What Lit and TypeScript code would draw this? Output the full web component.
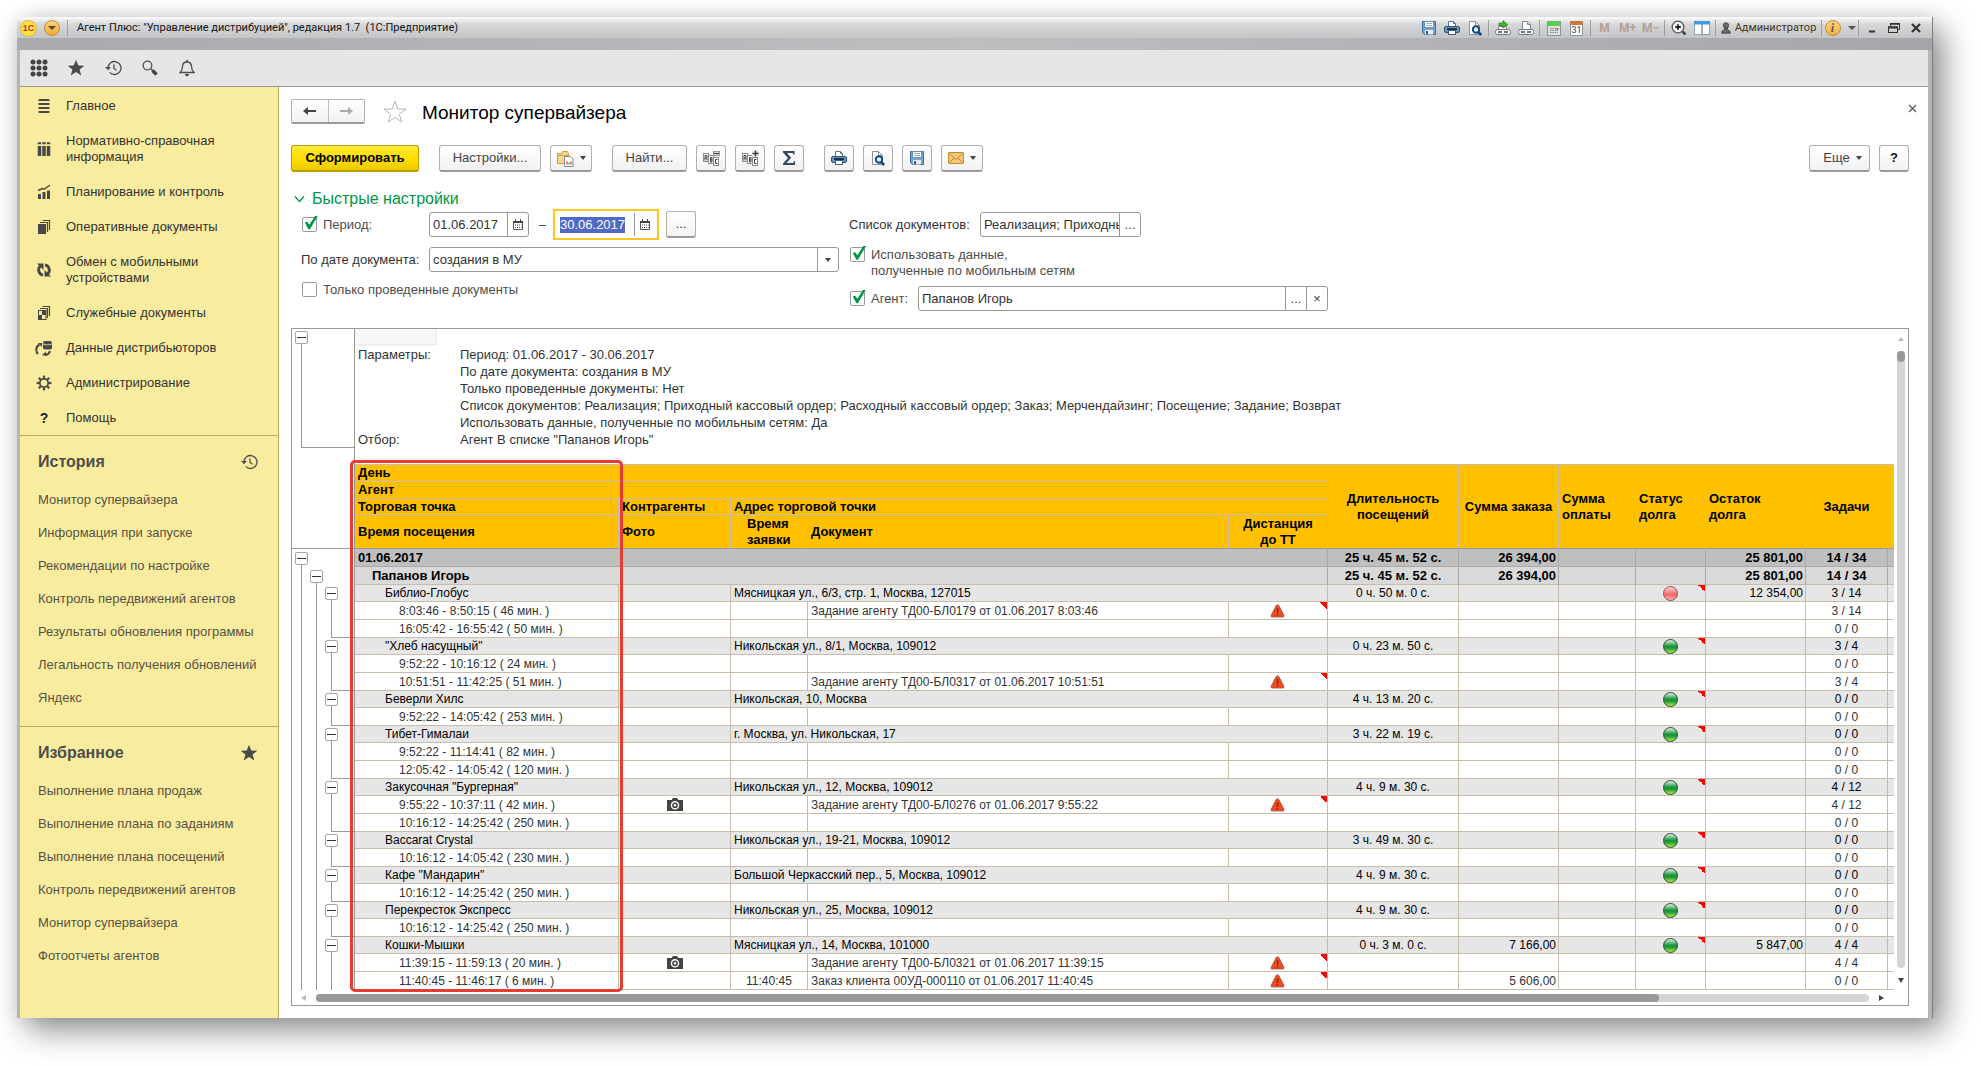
import { LitElement, html, css, svg, nothing, TemplateResult } from "lit";
import { customElement, query } from "lit/decorators.js";
import { classMap } from "lit/directives/class-map.js";

const icon = (w: number, h: number, body: TemplateResult, vb = `0 0 ${w} ${h}`) =>
  html`<svg width=${w} height=${h} viewBox=${vb} aria-hidden="true">${body}</svg>`;

const floppy = icon(16, 16, svg`
  <path d="M1.5 1.5h13v13h-11l-2-2z" fill="#7ba3cc" stroke="#3f6a97"/>
  <rect x="3.5" y="1.5" width="9" height="6" fill="#fff" stroke="#6d8fb5"/>
  <path d="M5 3.5h6M5 5.5h6" stroke="#9db3cb"/>
  <rect x="4" y="10" width="8" height="4.5" fill="#e9eef4"/><rect x="5" y="11" width="2" height="3.5" fill="#2f5f92"/>`);
const printer = icon(16, 16, svg`
  <path d="M4.5 7V1.5h5l2 2V7" fill="#fff" stroke="#5b7590"/>
  <path d="M9.5 1.5v2h2" fill="none" stroke="#5b7590"/>
  <rect x="0.5" y="6.5" width="15" height="6" rx="1.5" fill="#6d95bb" stroke="#2d5278"/>
  <rect x="3" y="8" width="10" height="2" fill="#16334f"/>
  <rect x="4.5" y="10.5" width="7" height="4" fill="#fff" stroke="#3c5f83"/>`);
const preview = icon(16, 16, svg`
  <path d="M2.5 1.5h6l4 4v9h-10z" fill="#fff" stroke="#8a9099"/>
  <path d="M8.5 1.5v4h4" fill="none" stroke="#8a9099"/>
  <circle cx="9" cy="9.5" r="3.2" fill="#e4f1fb" stroke="#0d4d80" stroke-width="2"/>
  <path d="M11.2 12l3 3" stroke="#0d4d80" stroke-width="2.5"/>`);
const sendPrint = icon(16, 16, svg`
  <path d="M3.5 9.5V6.5h8v3" fill="#fff" stroke="#7f8791"/>
  <rect x="0.5" y="9.5" width="15" height="5" rx="2" fill="#f2f3f5" stroke="#6f7782"/>
  <path d="M3 12h4M9 12h4" stroke="#6f7782" stroke-width="2"/>
  <path d="M4 3.2h4V.8l4.5 3.7L8 8V5.8H4z" fill="#35c22a" stroke="#157a12" stroke-width=".8"/>`);
const sheetPrint = icon(16, 16, svg`
  <path d="M4.5 9.5V1.5h5l3 3v5" fill="#fff" stroke="#7f8791"/><path d="M9.5 1.5v3h3" fill="none" stroke="#7f8791"/>
  <rect x="0.5" y="9.5" width="15" height="5" rx="2" fill="#f2f3f5" stroke="#6f7782"/>
  <path d="M3 12h4M9 12h4" stroke="#6f7782" stroke-width="2"/>`);
const calc = icon(14, 16, svg`
  <rect x=".5" y="1.5" width="13" height="14" fill="#dfe3e3" stroke="#8c9594"/>
  <rect x="1" y="1" width="12" height="5" fill="#55cf55"/>
  <path d="M3 8.5h8M3 10.5h8M3 12.5h8" stroke="#6f7b7a" stroke-dasharray="1.5 1"/><path d="M10.5 8v2" stroke="#e03a30" stroke-width="1.5"/>`);
const calendar31 = html`<span class="cal31"><i></i><b>31</b></span>`;
const zoomPlus = icon(16, 16, svg`
  <circle cx="7" cy="7" r="5.8" fill="#f6f6f6" stroke="#555" stroke-width="1.3"/>
  <path d="M4.2 7h5.6M7 4.2v5.6" stroke="#222" stroke-width="1.8"/><path d="M11.5 11.5l3 3" stroke="#444" stroke-width="2.5"/>`);
const panes = icon(16, 16, svg`
  <rect x=".5" y="1.5" width="15" height="13" fill="#fff" stroke="#8aa2b5"/><rect x="0" y="1" width="16" height="3.5" fill="#3d9be6"/>
  <path d="M8 4v11" stroke="#6f8494" stroke-width="1.3"/>`);
const person = icon(10, 12, svg`
  <circle cx="5" cy="3.5" r="2.7" fill="#6a6a6a" stroke="#3a3a3a" stroke-width=".8"/>
  <path d="M.8 11.2V9.5Q2.5 8 3.8 7.3V6h2.400v1.300Q7.5 8 9.2 9.5v1.7z" fill="#6a6a6a" stroke="#3a3a3a" stroke-width=".8"/>`);
const historyIcon = icon(18, 16, svg`
  <path d="M4 8a6.500 6.500 0 1 1 1.700 4.400" fill="none" stroke="#4d4d4d" stroke-width="1.300"/>
  <path d="M1 7h6l-3 3.200z" fill="#4d4d4d"/><path d="M10 4.500V8.500l2.500 1.800" fill="none" stroke="#4d4d4d" stroke-width="1.300"/>`);
const starIcon = icon(18, 18, svg`
  <path d="M9 .8l2.300 5.700 6 .2-4.700 3.800 1.700 6L9 13.100l-5.300 3.400 1.700-6L.7 6.700l6-.2z" fill="#4a4a4a"/>`);
const starOutline = icon(24, 24, svg`
  <path d="M12 1l2.700 8 8.300.1-6.700 5 2.500 8L12 17.300 5.200 22.100l2.500-8L1 9.100 9.300 9z" fill="#fff" stroke="#b4b8bc"/>`);
const gridIcon = icon(18, 18, svg`${[3, 9, 15].map((y) => [3, 9, 15].map((x) => svg`<circle cx=${x} cy=${y} r="2.500" fill="#444"/>`))}`);
const searchIcon = icon(16, 16, svg`
  <circle cx="5.500" cy="5.500" r="4.300" fill="none" stroke="#4d4d4d" stroke-width="1.300"/>
  <path d="M8.500 8.500l2.500 2.500" stroke="#4d4d4d" stroke-width="1.300"/><path d="M10.500 10.500l4 4" stroke="#444" stroke-width="3.500"/>`);
const bellIcon = icon(16, 18, svg`
  <path d="M1 13.500Q3.500 11 3.500 7.500 3.500 3 8 3t4.500 4.500Q12.500 11 15 13.500z" fill="none" stroke="#4d4d4d" stroke-width="1.300"/>
  <path d="M8 .8v2.400" stroke="#4d4d4d" stroke-width="1.500"/><path d="M6 15.500h4l-2 1.800z" fill="#4d4d4d" stroke="#4d4d4d"/>`);
const arrow = (left: boolean, c: string) => icon(13, 10, svg`
  <path d=${left ? "M13 4H5V1L0 5l5 4V6h8z" : "M0 4h8V1l5 4-5 4V6H0z"} fill=${c}/>`);
const sigma = icon(14, 16, svg`<path d="M1 1h11.500v3.500h-1.500V3H5l4.200 4.800L4.500 13h7V11.200H13V15H1v-1.500L6 8 1 2.500z" fill="#34495c"/>`);
const abc = (plus: boolean) => icon(17, 16, svg`
  <g fill="#fff" stroke="#8b8b8b"><rect x=".5" y="3.500" width="5" height="8"/><rect x="5.500" y="5.500" width="5" height="8"/><rect x="10.500" y="7.500" width="5" height="8"/></g>
  <g fill="none" stroke="#3f3f3f"><path d="M2 10.500V5.500h2v5M2 8h2"/><path d="M7.500 7.500h1.500v4.500H7.500z M7.500 9.800h1.500"/><path d="M14.500 9.500h-2v4h2"/></g>
  ${plus
    ? svg`<rect x="10" y="0" width="7" height="7" fill="#e9e9e9"/><path d="M10.500 3.500h6M13.500 .5v6" stroke="#3a3a3a" stroke-width="1.400"/>`
    : svg`<rect x="10.500" y="1.500" width="6" height="4" fill="#fff" stroke="#999"/><path d="M11 3.500h5" stroke="#3a3a3a" stroke-width="1.400"/>`}`);
const folder = icon(17, 17, svg`
  <path d="M.5 3.500V13.500h11V3.500l-1-2h-5l-1 2z" fill="#f6d88c" stroke="#cf9f45"/><path d="M1 5.500h10" stroke="#cf9f45"/>
  <path d="M7.500 6.500h6l2.500 2.500v7.500H7.500z" fill="#fff" stroke="#7d8a9a"/>
  <path d="M10 14.500v-3M14 14.500v-3" stroke="#d8433a" stroke-width="1.300"/><path d="M12 14.500v-2" stroke="#3cae4a" stroke-width="1.300"/>`);
const mail = icon(16, 12, svg`
  <rect x=".5" y=".5" width="15" height="11" rx="1" fill="#f5c878" stroke="#c4862a"/>
  <path d="M1 1l7 6.500L15 1M1 11l5-5M15 11l-5-5" fill="none" stroke="#c4862a"/>`);
const dateIcon = icon(10, 11, svg`
  <path d="M.5 2.500h9v8h-9z" fill="#fff" stroke="#555"/><path d="M0 3h10" stroke="#444" stroke-width="2"/><path d="M2.500 0v3M7.500 0v3" stroke="#444"/>
  <path d="M2 6h6.500M2 8.500h6.500" stroke="#444" stroke-dasharray="1 1"/>`);
const caret = html`<i class="caret"></i>`;
const warn = icon(15, 14, svg`
  <path d="M7.500.8Q8.500.8 9 1.800L14 11.500Q14.300 13 13 13H2Q.7 13 1 11.500L6 1.800Q6.500.8 7.500.8z" fill="#f4481e" stroke="#8d5a4c" stroke-width=".8"/>
  <path d="M7.500 4v5M7.500 10v1.600" stroke="#7a3020" stroke-width="1.500"/>`);
const camera = icon(16, 13, svg`
  <path d="M0 2h4.500L6 0h4l1.500 2H16v11H0z" fill="#444"/><circle cx="8" cy="7.300" r="3.600" fill="none" stroke="#fff" stroke-width="1.400"/><circle cx="8" cy="7.300" r="1.300" fill="#fff"/>`);

const g = "#484848";
const navIcons: Record<string, TemplateResult> = {
  main: icon(16, 16, svg`<path d="M2.500 2h11M2.500 6h11M2.500 10h11M2.500 14h11" stroke=${g} stroke-width="1.800"/>`),
  books: icon(16, 16, svg`<path d="M3.500 5v10M8 5v10M12.500 5v10" stroke=${g} stroke-width="3.500"/><path d="M1.800 2.200h3.400M6.300 2.200h3.400M10.800 2.200h3.400" stroke=${g} stroke-width="2"/>`),
  plan: icon(16, 16, svg`<path d="M3.500 10v5M8 8v7M12.500 6.500v8.500" stroke=${g} stroke-width="3"/><path d="M2 6.500l4.500-2 2 .5L14 1" fill="none" stroke=${g} stroke-width="1.400"/>`),
  docs: icon(16, 16, svg`<rect x="2" y="5" width="8" height="10" fill=${g}/><path d="M4 3.500h7.500V13M6.500 1.500h7V11" fill="none" stroke=${g} stroke-width="1.200"/>`),
  sync: icon(16, 16, svg`<path d="M7 13.200A5.400 5.400 0 0 1 4.300 4M9 2.800A5.400 5.400 0 0 1 11.700 12" fill="none" stroke=${g} stroke-width="2.800"/><path d="M1 1.500h6.500V8zM15 14.500H8.500V8z" fill=${g}/>`),
  service: icon(16, 16, svg`<rect x="2.500" y="5.500" width="7.500" height="9" fill="none" stroke=${g}/><path d="M2 10h4v5H2zM6 5.500h4V10H6z" fill=${g}/><path d="M4 3.500h7.500V13M6.500 1.500h7V11" fill="none" stroke=${g} stroke-width="1.200"/>`),
  dist: icon(18, 16, svg`<path d="M3 14A6 6 0 0 1 4.500 4.500" fill="none" stroke=${g} stroke-width="2"/><path d="M3 3h4v4z" fill=${g}/><rect x="8" y="1" width="9" height="8.500" rx="2" fill=${g}/><path d="M8 4q4.500 2 9 0" stroke="#faec9e" fill="none" stroke-width=".8"/><path d="M15 11q-1 3.500-4.500 4" stroke=${g} stroke-width="2" fill="none"/><path d="M11 11.500V16l-4-1z" fill=${g}/>`),
  gear: icon(16, 16, svg`<circle cx="8" cy="8" r="4.200" fill="none" stroke=${g} stroke-width="1.800"/>${[0, 45, 90, 135, 180, 225, 270, 315].map((a) => svg`<path d="M8 3.500V.6" stroke=${g} stroke-width="2.200" transform=${`rotate(${a} 8 8)`}/>`)}`),
  help: html`<b class="q">?</b>`,
};

const nav: [string, string][] = [
  ["main", "Главное"], ["books", "Нормативно-справочная информация"], ["plan", "Планирование и контроль"],
  ["docs", "Оперативные документы"], ["sync", "Обмен с мобильными устройствами"], ["service", "Служебные документы"],
  ["dist", "Данные дистрибьюторов"], ["gear", "Администрирование"], ["help", "Помощь"],
];
const history = ["Монитор супервайзера", "Информация при запуске", "Рекомендации по настройке", "Контроль передвижений агентов",
  "Результаты обновления программы", "Легальность получения обновлений", "Яндекс"];
const favorites = ["Выполнение плана продаж", "Выполнение плана по заданиям", "Выполнение плана посещений",
  "Контроль передвижений агентов", "Монитор супервайзера", "Фотоотчеты агентов"];

interface Visit { time: string; tasks: string; doc?: string; at?: string; photo?: boolean; warn?: boolean; sum?: string }
interface Outlet { name: string; address: string; duration: string; tasks: string; red?: boolean; sum?: string; debt?: string; visits: Visit[] }

const outlets: Outlet[] = [
  { name: "Библио-Глобус", address: "Мясницкая ул., 6/3, стр. 1, Москва, 127015", duration: "0 ч. 50 м. 0 с.", tasks: "3 / 14", red: true, debt: "12 354,00", visits: [
    { time: "8:03:46 - 8:50:15 ( 46 мин. )", doc: "Задание агенту ТД00-БЛ0179 от 01.06.2017 8:03:46", warn: true, tasks: "3 / 14" },
    { time: "16:05:42 - 16:55:42 ( 50 мин. )", tasks: "0 / 0" }] },
  { name: "\"Хлеб насущный\"", address: "Никольская ул., 8/1, Москва, 109012", duration: "0 ч. 23 м. 50 с.", tasks: "3 / 4", visits: [
    { time: "9:52:22 - 10:16:12 ( 24 мин. )", tasks: "0 / 0" },
    { time: "10:51:51 - 11:42:25 ( 51 мин. )", doc: "Задание агенту ТД00-БЛ0317 от 01.06.2017 10:51:51", warn: true, tasks: "3 / 4" }] },
  { name: "Беверли Хилс", address: "Никольская, 10, Москва", duration: "4 ч. 13 м. 20 с.", tasks: "0 / 0", visits: [
    { time: "9:52:22 - 14:05:42 ( 253 мин. )", tasks: "0 / 0" }] },
  { name: "Тибет-Гималаи", address: "г. Москва, ул. Никольская, 17", duration: "3 ч. 22 м. 19 с.", tasks: "0 / 0", visits: [
    { time: "9:52:22 - 11:14:41 ( 82 мин. )", tasks: "0 / 0" },
    { time: "12:05:42 - 14:05:42 ( 120 мин. )", tasks: "0 / 0" }] },
  { name: "Закусочная \"Бургерная\"", address: "Никольская ул., 12, Москва, 109012", duration: "4 ч. 9 м. 30 с.", tasks: "4 / 12", visits: [
    { time: "9:55:22 - 10:37:11 ( 42 мин. )", photo: true, doc: "Задание агенту ТД00-БЛ0276 от 01.06.2017 9:55:22", warn: true, tasks: "4 / 12" },
    { time: "10:16:12 - 14:25:42 ( 250 мин. )", tasks: "0 / 0" }] },
  { name: "Baccarat Crystal", address: "Никольская ул., 19-21, Москва, 109012", duration: "3 ч. 49 м. 30 с.", tasks: "0 / 0", visits: [
    { time: "10:16:12 - 14:05:42 ( 230 мин. )", tasks: "0 / 0" }] },
  { name: "Кафе \"Мандарин\"", address: "Большой Черкасский пер., 5, Москва, 109012", duration: "4 ч. 9 м. 30 с.", tasks: "0 / 0", visits: [
    { time: "10:16:12 - 14:25:42 ( 250 мин. )", tasks: "0 / 0" }] },
  { name: "Перекресток Экспресс", address: "Никольская ул., 25, Москва, 109012", duration: "4 ч. 9 м. 30 с.", tasks: "0 / 0", visits: [
    { time: "10:16:12 - 14:25:42 ( 250 мин. )", tasks: "0 / 0" }] },
  { name: "Кошки-Мышки", address: "Мясницкая ул., 14, Москва, 101000", duration: "0 ч. 3 м. 0 с.", tasks: "4 / 4", sum: "7 166,00", debt: "5 847,00", visits: [
    { time: "11:39:15 - 11:59:13 ( 20 мин. )", photo: true, doc: "Задание агенту ТД00-БЛ0321 от 01.06.2017 11:39:15", warn: true, tasks: "4 / 4" },
    { time: "11:40:45 - 11:46:17 ( 6 мин. )", at: "11:40:45", doc: "Заказ клиента 00УД-000110 от 01.06.2017 11:40:45", warn: true, sum: "5 606,00", tasks: "0 / 0" }] },
];

const base = css`
  * { box-sizing: border-box; }
  svg { display: block; flex: none; }
  button, input, select { font: inherit; color: inherit; margin: 0; }
  button { cursor: pointer; }
  i, b { font-style: normal; }
`;

@customElement("title-bar")
export class TitleBar extends LitElement {
  static styles = [base, css`
    :host { display: block; font: 11px/20px Roboto, "Liberation Sans", sans-serif; color: #151515; }
    .bar { display: flex; align-items: center; height: 21px; padding: 1px 5px 0 3px; background: linear-gradient(#fbfbfb, #d6d7d9 35%, #c3c5c7); }
    .strip { height: 12px; background: linear-gradient(90deg, #a9aaad, #bdbec0 50%, #a5a6aa); }
    .bar button { display: flex; align-items: center; justify-content: center; width: 23px; height: 20px; padding: 0; border: 0; background: none; }
    .bar .win { width: 22px; }
    .logo { width: 17px; height: 17px; border-radius: 50%; background: radial-gradient(#fff36b, #f7d51f); border: 1px solid #e0b93a; color: #d8201c; font: bold 9px/15px "Liberation Sans", sans-serif; text-align: center; }
    .bar .drop { width: 16px; height: 16px; margin: 0 5px 0 7px; border-radius: 50%; border: 1px solid #c98c28; background: linear-gradient(#fbd382, #f0a93a); color: #5b4632; }
    .caret { border: 4px solid transparent; border-top-color: currentColor; border-bottom: 0; }
    .sep { width: 1px; height: 16px; margin: 0 2px; background: #9b9da0; }
    .text { flex: 1; padding-left: 7px; white-space: pre; }
    .bar .m { color: #b3a092; font-size: 12px; font-weight: bold; }
    .bar .user { width: 101px; gap: 4px; color: #4a3510; }
    .bar .info { width: 32px; gap: 7px; color: #555; }
    .ball { width: 16px; height: 16px; border-radius: 50%; border: 1px solid #c98c28; background: linear-gradient(#fbd382, #f2b14a); font: italic bold 12px/14px "Liberation Serif", serif; color: #6b5536; }
    .cal31 { width: 13px; height: 15px; background: #fff; border: 1px solid #8b97a5; border-top: 0; display: block; }
    .cal31 i { display: block; height: 4px; background: #c9773f; margin: 0 -1px; }
    .cal31 b { display: block; font: 9px/10px Roboto, sans-serif; color: #345; }
  `];
  render() {
    const sep = html`<span class="sep"></span>`;
    const b = (label: string, body: unknown, cls = "") => html`<button class=${cls} aria-label=${label}>${body}</button>`;
    return html`
      <div class="bar">
        <span class="logo">1С</span>
        ${b("Меню", html`<i class="caret"></i>`, "drop")}${sep}
        <span class="text">Агент Плюс: "Управление дистрибуцией", редакция 1.7  (1С:Предприятие)</span>
        ${b("Сохранить", floppy)}${b("Печать", printer)}${b("Просмотр", preview)}${sep}
        ${b("Отправить", sendPrint)}${b("Лист", sheetPrint)}${sep}
        ${b("Калькулятор", calc)}${b("Календарь", calendar31)}${sep}
        ${b("M", "M", "m")}${b("M+", "M+", "m")}${b("M-", "M−", "m")}${sep}
        ${b("Масштаб", zoomPlus)}${b("Панели", panes)}${sep}
        <button class="user">${person}Администратор</button>${sep}
        ${b("Справка", html`<span class="ball">i</span><i class="caret"></i>`, "info")}${sep}
        ${b("Свернуть", icon(14, 14, svg`<path d="M4 10.500h6" stroke="#333" stroke-width="2"/>`), "win")}
        ${b("Развернуть", icon(14, 14, svg`<path d="M3.500 5V2.500h9v6H11" fill="none" stroke="#333"/><path d="M3 3h10" stroke="#333" stroke-width="1.500"/><rect x="1.500" y="6" width="9" height="5.500" fill="none" stroke="#333"/><path d="M1 6.500h10" stroke="#333" stroke-width="2"/>`), "win")}
        ${b("Закрыть", icon(14, 14, svg`<path d="M3 3l8 8M11 3l-8 8" stroke="#333" stroke-width="2.200"/>`), "win")}
      </div>
      <div class="strip"></div>`;
  }
}

@customElement("side-panel")
export class SidePanel extends LitElement {
  static styles = [base, css`
    :host { display: block; width: 259px; flex: none; background: #faec9e; border-right: 1px solid #b8ab5e; font: 13px/16px "Liberation Sans", Arial, sans-serif; color: #333; }
    a { color: inherit; text-decoration: none; display: flex; align-items: center; }
    nav.main { padding-top: 1px; border-bottom: 1px solid #b8ab5e; }
    nav.main a { padding: 10px 40px 9px 15px; gap: 13px; }
    .ico { display: flex; justify-content: center; width: 18px; flex: none; }
    .q { color: #222; font-size: 14px; }
    section { padding: 8px 0 12px 18px; border-bottom: 1px solid #b8ab5e; }
    section:last-child { border: 0; }
    h2 { display: flex; align-items: center; justify-content: space-between; margin: 0 20px 4px 0; font-size: 16px; line-height: 35px; color: #4d4d4d; }
    section a { height: 33px; color: #555245; }
  `];
  private list(title: string, ico: TemplateResult, items: string[]) {
    return html`<section><h2>${title}${ico}</h2>${items.map((t) => html`<a href="#">${t}</a>`)}</section>`;
  }
  render() {
    return html`
      <nav class="main">${nav.map(([k, t]) => html`<a href="#"><span class="ico">${navIcons[k]}</span><span>${t}</span></a>`)}</nav>
      ${this.list("История", historyIcon, history)}
      ${this.list("Избранное", starIcon, favorites)}`;
  }
}

@customElement("quick-settings")
export class QuickSettings extends LitElement {
  @query("#to") private to!: HTMLInputElement;
  static styles = [base, css`
    :host { display: block; margin-top: 16px; font-size: 13px; line-height: 16px; color: #444; }
    h2 { display: flex; align-items: center; gap: 7px; margin: 0; padding-left: 3px; font: 16px/21px "Liberation Sans", Arial, sans-serif; color: #009646; }
    .cols { display: flex; gap: 10px; }
    .col { display: flex; flex-direction: column; gap: 7px; }
    .left { width: 548px; padding-left: 10px; }
    .row { display: flex; align-items: center; height: 25px; }
    .tall { height: 31px; }
    .low { height: 21px; }
    .two { height: 32px; align-items: flex-start; }
    label { display: flex; gap: 6px; }
    .name { width: 128px; flex: none; color: #333; }
    .tick { padding-left: 1px; color: #4d4d4d; }
    input[type="checkbox"] { appearance: none; width: 15px; height: 15px; flex: none; border: 1px solid #999; border-radius: 2px; background: #fff; display: block; }
    input[type="checkbox"]:checked::after { content: ""; display: block; width: 15px; height: 14px; margin-top: -2px; background: #009646; clip-path: polygon(12% 50%, 28% 44%, 42% 66%, 82% 0, 100% 0, 46% 98%, 36% 98%); }
    .field { display: flex; height: 25px; border: 1px solid #999; border-radius: 3px; background: #fff; color: #333; }
    .field input, .field select { flex: 1; min-width: 0; width: 0; border: 0; padding: 0 0 0 3px; background: none; outline: none; color: #333; }
    .field select { appearance: none; }
    .field button { width: 21px; flex: none; border: 0; border-left: 1px solid #999; padding: 0; background: none; display: flex; align-items: center; justify-content: center; color: #444; }
    .date { width: 100px; }
    .focus { outline: 2px solid #f9c623; outline-offset: 1px; border-color: transparent; border-radius: 0; }
    .focus input::selection { background: #4f6ac4; color: #fff; }
    .dash { width: 27px; text-align: center; }
    .more { width: 30px; height: 27px; margin-left: 10px; padding: 0; border: 1px solid #b0b0b0; border-bottom: 2px solid #999; border-radius: 3px; background: linear-gradient(#fff, #f2f2f2); }
    .wide { flex: 1; }
    .docs { width: 161px; }
    .agent { width: 410px; }
    .doc-name { width: 131px; }
    .agent-name { width: 69px; }
    .caret { border: 3px solid transparent; border-top: 4px solid #444; border-bottom: 0; }
    .arrow { display: flex; align-items: center; justify-content: center; width: 21px; border-left: 1px solid #999; pointer-events: none; }
  `];
  firstUpdated() {
    this.to.focus();
    this.to.select();
  }
  render() {
    return html`
      <h2>${icon(11, 8, svg`<path d="M1 1.500l4.500 5 4.500-5" fill="none" stroke="#009646" stroke-width="1.300"/>`)}Быстрые настройки</h2>
      <div class="cols">
        <div class="col left">
          <div class="row tall">
            <label class="name tick"><input type="checkbox" checked>Период:</label>
            <span class="field date"><input aria-label="Начало" value="01.06.2017"><button aria-label="Выбрать">${dateIcon}</button></span>
            <span class="dash">–</span>
            <span class="field date focus"><input id="to" aria-label="Конец" value="30.06.2017"><button aria-label="Выбрать">${dateIcon}</button></span>
            <button class="more">...</button>
          </div>
          <div class="row">
            <label class="name" for="by">По дате документа:</label>
            <span class="field wide"><select id="by"><option>создания в МУ</option></select><span class="arrow">${caret}</span></span>
          </div>
          <div class="row low"><label class="tick"><input type="checkbox">Только проведенные документы</label></div>
        </div>
        <div class="col">
          <div class="row tall">
            <label class="name doc-name" for="docs">Список документов:</label>
            <span class="field docs"><input id="docs" value="Реализация; Приходный кассовый ордер"><button aria-label="Выбрать">...</button></span>
          </div>
          <div class="row two"><label class="tick"><input type="checkbox" checked><span>Использовать данные,<br>полученные по мобильным сетям</span></label></div>
          <div class="row">
            <label class="tick agent-name"><input type="checkbox" checked>Агент:</label>
            <span class="field agent"><input aria-label="Агент" value="Папанов Игорь"><button aria-label="Выбрать">...</button><button aria-label="Очистить">×</button></span>
          </div>
        </div>
      </div>`;
  }
}

@customElement("report-sheet")
export class ReportSheet extends LitElement {
  static styles = [base, css`
    :host { display: block; margin-top: 17px; border: 1px solid #999; color: #333; font-size: 13px; line-height: 16px; }
    .frame { display: grid; grid-template-columns: minmax(0, 1fr) 14px; }
    .sheet { position: relative; min-width: 0; }
    .params { display: flex; height: 135px; }
    .gutter { width: 63px; flex: none; border-right: 1px solid #999; padding: 2px 0 16px 3px; }
    .bracket { display: flex; flex-direction: column; height: 100%; width: 59px; }
    .bracket .stem { flex: 1; margin-left: 6px; border: 1px solid #999; border-width: 0 0 1px 1px; }
    .toggle { display: block; width: 13px; height: 13px; padding: 0; flex: none; border: 1px solid #a5a5a5; border-radius: 2px; background: linear-gradient(#333, #333) center / 9px 1px no-repeat #fff; }
    .corner { width: 82px; height: 17px; background: #f8f8f8; border: 1px solid #f0f0f0; border-width: 0 2px 2px 0; }
    dl { display: grid; grid-template-columns: 102px 1fr; grid-auto-rows: 17px; margin: 0; padding-left: 3px; line-height: 17px; white-space: nowrap; }
    dt { grid-column: 1; }
    dd { grid-column: 2; margin: 0; }
    table { width: 100%; table-layout: fixed; border-collapse: separate; border-spacing: 0; font-size: 12px; line-height: 16px; }
    .c-gut { width: 63px; } .c-name { width: 264px; } .c-photo { width: 112px; } .c-at { width: 77px; } .c-dist { width: 99px; }
    .c-dur { width: 131px; } .c-sum { width: 100px; } .c-pay { width: 77px; } .c-stat { width: 70px; } .c-debt { width: 100px; } .c-task { width: 82px; } .c-end { width: 6px; }
    td, th { padding: 0 3px; border: 0 solid #c6bdac; border-width: 0 1px 1px 0; overflow: hidden; white-space: nowrap; text-align: left; vertical-align: middle; }
    th { background: #ffc000; color: #000; font-size: 13px; border-color: #c9bfae; }
    .day-head { height: 18px; border-top-width: 1px; }
    thead tr:first-child th { border-top: 1px solid #c9bfae; }
    .h17 { height: 17px; } .h33 { height: 33px; }
    td:last-child, .end { border-right: 0; }
    thead .bottom { border-bottom-color: #999; }
    .gut { padding: 0 0 0 2px; border-color: #999; border-bottom: 0; background: #fff; }
    thead tr:first-child .gut { border-top: 0; border-bottom: 1px solid #999; border-right-color: #999; background: #fff; }
    .mid { text-align: center; }
    th.pad { padding-left: 16px; }
    .num { text-align: right; padding-right: 2px; }
    .day td, .agent td { height: 18px; font-weight: bold; font-size: 13px; color: #000; border-color: #a9a9a9; }
    .day td { background: #bfbfbf; } .agent td { background: #d9d9d9; border-bottom-color: #c6bdac; }
    .outlet td { height: 17px; background: #e6e6e6; color: #000; }
    .visit td { height: 18px; }
    tbody td.gut { background: #fff; border-color: #999; border-bottom: 0; }
    .agent .name { padding-left: 17px; } .outlet .name { padding-left: 30px; } .visit .name { padding-left: 44px; }
    .levels { display: grid; grid-template-columns: 15px 15px 15px 15px; height: 17px; }
    .tall { height: 18px; }
    .levels span { display: flex; flex-direction: column; align-items: center; justify-content: center; }
    .line { background: linear-gradient(#999, #999) 7px 0 / 1px 100% no-repeat; }
    .start { background: linear-gradient(#999, #999) 7px 100% / 1px 50% no-repeat; }
    .last { background: linear-gradient(#999, #999) 7px 0 / 1px 100% no-repeat, linear-gradient(#999, #999) 7px 100% / 8px 1px no-repeat; }
    .foot { background: linear-gradient(#999, #999) 0 100% / 100% 1px no-repeat; }
    td.note { background-image: linear-gradient(to top right, transparent 50%, #f00 50%); background-position: 100% 0; background-size: 7px 7px; background-repeat: no-repeat; }
    .pic svg, .lamp { display: block; margin: 0 auto; }
    .lamp { width: 15px; height: 15px; border-radius: 50%; border: 1px solid #2e4a36; background: linear-gradient(#e2f2e4, #4fae66 35%, #14963c 50%, #1ea03a 65%, #b8ee3a); }
    .lamp.red { border-color: #8a5454; background: linear-gradient(#fbd0d0, #f98080 45%, #f46464 60%, #ffb5b5); }
    .mark { position: absolute; left: 58px; top: 131px; bottom: -2px; width: 273px; border: 3px solid #e63c30; border-radius: 5px; pointer-events: none; }
    .v { display: flex; flex-direction: column; align-items: center; padding: 8px 0 7px; gap: 10px; }
    .vt { flex: 1; width: 8px; border-radius: 4px; background: #d4d4d4; }
    .vt i { display: block; height: 11px; border-radius: 4px; background: #999; }
    .h { grid-column: 1 / -1; display: flex; align-items: center; gap: 10px; height: 15px; padding: 0 24px 0 9px; }
    .ht { flex: 1; height: 8px; border-radius: 4px; background: #d4d4d4; }
    .ht i { display: block; height: 8px; border-radius: 4px; background: #999; }
    .tri { border: 4px solid transparent; }
    .up { border-bottom-color: #bbb; border-width: 0 3px 4px; } .down { border-top-color: #444; border-width: 5px 3px 0; }
    .lt { border-right-color: #bbb; border-width: 3px 5px 3px 0; } .rt { border-left-color: #444; border-width: 3px 0 3px 5px; }
  `];
  private toggle = html`<button class="toggle" aria-label="Свернуть"></button>`;
  private gutter(level: number, last = false) {
    const cell = (i: number) => {
      if (i > level) return html`<span></span>`;
      if (i === level) return html`<span class="start">${this.toggle}</span>`;
      return html`<span class=${classMap({ line: !(last && i === 2), last: last && i === 2 })}></span>`;
    };
    return html`<td class="gut"><div class=${classMap({ levels: true, tall: level !== 2 })}>${[0, 1, 2].map(cell)}<span class=${last ? "foot" : ""}></span></div></td>`;
  }
  private total(cls: string, level: number, name: string) {
    return html`<tr class=${cls}>${this.gutter(level)}<td class="name" colspan="5">${name}</td><td class="mid">25 ч. 45 м. 52 с.</td>
      <td class="num">26 394,00</td><td></td><td></td><td class="num">25 801,00</td><td class="mid">14 / 34</td><td></td></tr>`;
  }
  private outlet(o: Outlet, oi: number) {
    return html`
      <tr class="outlet">${this.gutter(2)}<td class="name">${o.name}</td><td></td><td colspan="3">${o.address}</td>
        <td class="mid">${o.duration}</td><td class="num">${o.sum}</td><td></td>
        <td class="note"><i class=${classMap({ lamp: true, red: !!o.red })}></i></td>
        <td class="num">${o.debt}</td><td class="mid">${o.tasks}</td><td></td></tr>
      ${o.visits.map((v, i) => html`
        <tr class="visit">${this.gutter(3, i === o.visits.length - 1 && oi < outlets.length - 1)}<td class="name">${v.time}</td>
          <td class="pic">${v.photo ? camera : nothing}</td><td class="mid">${v.at}</td><td>${v.doc}</td>
          <td class=${classMap({ pic: true, note: !!v.warn })}>${v.warn ? warn : nothing}</td>
          <td></td><td class="num">${v.sum}</td><td></td><td></td><td></td><td class="mid">${v.tasks}</td><td></td></tr>`)}`;
  }
  render() {
    return html`
      <div class="frame">
        <div class="sheet">
          <div class="params">
            <div class="gutter"><div class="bracket">${this.toggle}<span class="stem"></span></div></div>
            <div>
              <div class="corner"></div>
              <dl>
                <dt>Параметры:</dt><dd>Период: 01.06.2017 - 30.06.2017</dd>
                <dd>По дате документа: создания в МУ</dd>
                <dd>Только проведенные документы: Нет</dd>
                <dd>Список документов: Реализация; Приходный кассовый ордер; Расходный кассовый ордер; Заказ; Мерчендайзинг; Посещение; Задание; Возврат</dd>
                <dd>Использовать данные, полученные по мобильным сетям: Да</dd>
                <dt>Отбор:</dt><dd>Агент В списке "Папанов Игорь"</dd>
              </dl>
            </div>
          </div>
          <table>
            <colgroup><col class="c-gut"><col class="c-name"><col class="c-photo"><col class="c-at"><col><col class="c-dist"><col class="c-dur"><col class="c-sum"><col class="c-pay"><col class="c-stat"><col class="c-debt"><col class="c-task"><col class="c-end"></colgroup>
            <thead>
              <tr><th class="gut" rowspan="4"></th><th class="day-head" colspan="5">День</th>
                <th class="mid bottom" rowspan="4">Длительность<br>посещений</th><th class="mid bottom" rowspan="4">Сумма заказа</th><th class="bottom" rowspan="4">Сумма<br>оплаты</th>
                <th class="bottom" rowspan="4">Статус<br>долга</th><th class="bottom" rowspan="4">Остаток<br>долга</th><th class="mid bottom" rowspan="4">Задачи</th><th class="bottom end" rowspan="4"></th></tr>
              <tr><th class="h17" colspan="5">Агент</th></tr>
              <tr><th class="h17">Торговая точка</th><th>Контрагенты</th><th colspan="3">Адрес торговой точки</th></tr>
              <tr><th class="h33 bottom">Время посещения</th><th class="bottom">Фото</th><th class="bottom pad">Время<br>заявки</th><th class="bottom">Документ</th><th class="bottom mid">Дистанция<br>до ТТ</th></tr>
            </thead>
            <tbody>
              ${this.total("day", 0, "01.06.2017")}
              ${this.total("agent", 1, "Папанов Игорь")}
              ${outlets.map((o, i) => this.outlet(o, i))}
            </tbody>
          </table>
          <div class="mark"></div>
        </div>
        <div class="v"><i class="tri up"></i><div class="vt"><i></i></div><i class="tri down"></i></div>
        <div class="h"><i class="tri lt"></i><div class="ht"><i style="width:86.5%"></i></div><i class="tri rt"></i></div>
      </div>`;
  }
}

@customElement("app-root")
export class AppRoot extends LitElement {
  static styles = [base, css`
    :host { display: block; padding: 17px 48px 48px 17px; background: #fff; font: 13px/16px "Liberation Sans", Arial, sans-serif; color: #333; overflow: hidden; }
    .window { background: #fff; box-shadow: 10px 12px 30px rgba(0, 0, 0, .45), 0 0 16px rgba(0, 0, 0, .08); }
    .body { border: solid #b4b5b7; border-width: 0 4px 0 3px; }
    .edge { border-right: 1px solid #7d7d7d; }
    .tools { display: flex; align-items: center; height: 37px; background: #e6e6e6; border-bottom: 1px solid #999; }
    .tools button { display: flex; align-items: center; justify-content: center; width: 37px; height: 36px; padding: 0; border: 0; background: none; }
    .split { display: flex; align-items: stretch; }
    main { flex: 1; min-width: 0; padding: 12px 19px 12px 12px; }
    .head { display: flex; align-items: center; height: 25px; }
    .hist { display: flex; width: 74px; height: 25px; border: 1px solid #b0b0b0; border-bottom: 2px solid #999; border-radius: 2px; background: linear-gradient(#fff, #f2f2f2); }
    .hist button { flex: 1; display: flex; align-items: center; justify-content: center; border: 0; background: none; padding: 0; }
    .hist button + button { border-left: 1px solid #c0c0c0; }
    .fav { margin: 0 15px 0 18px; padding: 0; border: 0; background: none; }
    h1 { flex: 1; margin: 0; padding-top: 2px; font-size: 19px; line-height: 24px; font-weight: normal; color: #000; }
    .close { padding: 0; border: 0; background: none; margin: 0 -9px 6px 0; }
    .cmds { display: flex; gap: 9px; margin-top: 21px; }
    .cmds button { display: flex; align-items: center; justify-content: center; gap: 6px; width: 30px; height: 27px; padding: 0; border: 1px solid #b0b0b0; border-bottom: 2px solid #999; border-radius: 3px; background: linear-gradient(#fff, #f1f1f1); color: #444; }
    .cmds .go { width: 128px; margin-right: 11px; border-color: #b89c00; background: linear-gradient(#ffe83a, #ffdf00 50%, #edc900); color: #000; font-weight: bold; }
    .cmds .set { width: 102px; }
    .cmds .dd { width: 42px; }
    .cmds .gap { margin-right: 11px; }
    .cmds .find { width: 75px; }
    .cmds .moreb { width: 61px; margin-left: auto; padding-left: 6px; }
    .cmds .help { font-weight: bold; color: #111; }
    .caret { border: 3px solid transparent; border-top: 4px solid #444; border-bottom: 0; }
  `];
  render() {
    const b = (cls: string, label: string, body: unknown) => html`<button class=${cls} aria-label=${label}>${body}</button>`;
    return html`
      <div class="window"><div class="edge">
        <title-bar></title-bar>
        <div class="body">
          <div class="tools">
            ${b("", "Меню функций", gridIcon)}${b("", "Избранное", starIcon)}${b("", "История", historyIcon)}${b("", "Поиск", searchIcon)}${b("", "Оповещения", bellIcon)}
          </div>
          <div class="split">
            <side-panel></side-panel>
            <main>
              <div class="head">
                <div class="hist">${b("", "Назад", arrow(true, "#444"))}${b("", "Вперед", arrow(false, "#aaa"))}</div>
                ${b("fav", "В избранное", starOutline)}
                <h1>Монитор супервайзера</h1>
                ${b("close", "Закрыть", icon(11, 11, svg`<path d="M2 2l7 7M9 2l-7 7" stroke="#555" stroke-width="1.200"/>`))}
              </div>
              <div class="cmds">
                <button class="go">Сформировать</button>
                <button class="set">Настройки...</button>
                ${b("dd gap", "Варианты", html`${folder}${caret}`)}
                <button class="find">Найти...</button>
                ${b("", "Свернуть группы", abc(false))}${b("", "Развернуть группы", abc(true))}${b("gap", "Сумма", sigma)}
                ${b("", "Печать", printer)}${b("", "Просмотр", preview)}${b("", "Сохранить", floppy)}${b("dd", "Отправить", html`${mail}${caret}`)}
                <button class="moreb">Еще${caret}</button><button class="help">?</button>
              </div>
              <quick-settings></quick-settings>
              <report-sheet></report-sheet>
            </main>
          </div>
        </div>
      </div></div>`;
  }
}
